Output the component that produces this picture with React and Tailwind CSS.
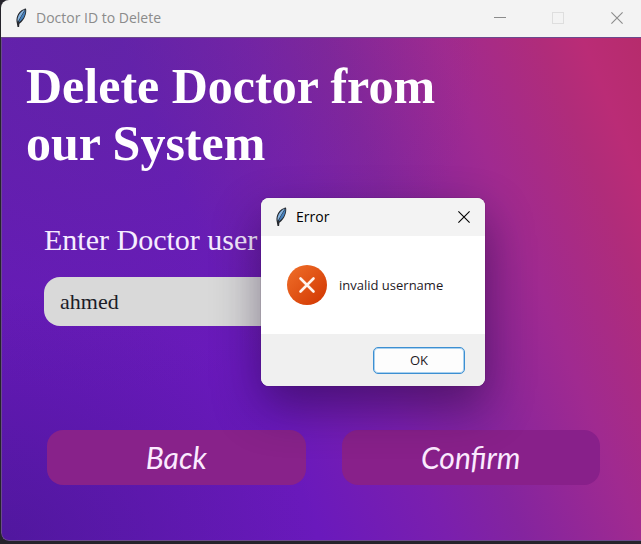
import React from "react";

function Feather() {
  return (
    <svg viewBox="0 0 16 20" className="h-5 w-4 shrink-0" aria-hidden="true">
      <path
        d="M13 .4C9.2 1 5.6 4 4.2 8C3.4 10.4 3.2 12.8 3.8 15L4.5 19H6.1L6.4 15.8C9 13.8 11.2 11 12.2 8C13.1 5.4 13.6 2.6 13 .4Z"
        fill="#25282e"
      />
      <path d="M12 1.4C8.6 2.8 5.7 6 4.9 9.4C4.5 11 4.4 12 4.8 13.8C7 9.8 9.4 5.6 12 1.4Z" fill="#86b4e0" />
      <path d="M12.4 1.8C9.8 6 7 10.2 5.6 14.4C8.8 12.2 10.8 9.8 11.6 7.2C12.2 5.4 12.6 3.6 12.4 1.8Z" fill="#4580bd" />
    </svg>
  );
}

function CloseIcon() {
  return (
    <svg viewBox="0 0 12 12" className="size-3" fill="none" stroke="currentColor" strokeWidth="1.1" aria-hidden="true">
      <path d="M.4 .4 11.6 11.6M11.6 .4 .4 11.6" />
    </svg>
  );
}

function TitleBar() {
  return (
    <header className="flex h-[37px] items-center bg-[#f3f3f3] pb-[2px] pl-3 font-['Open_Sans',sans-serif] text-[#8b8b8b]">
      <Feather />
      <span className="ml-[7px] text-sm">Doctor ID to Delete</span>
      <div className="ml-auto flex h-full items-center">
        <button type="button" aria-label="Minimize" className="flex h-full w-[46px] items-center justify-center">
          <svg viewBox="0 0 12 12" className="size-3" aria-hidden="true">
            <path d="M0 5.5H12" stroke="currentColor" />
          </svg>
        </button>
        <button type="button" disabled aria-label="Maximize" className="flex h-full w-[70px] items-center justify-center">
          <svg viewBox="0 0 12 12" className="size-3" aria-hidden="true">
            <rect x=".5" y=".5" width="11" height="11" fill="none" stroke="#dedede" />
          </svg>
        </button>
        <button type="button" aria-label="Close" className="flex h-full w-12 items-center justify-center">
          <CloseIcon />
        </button>
      </div>
    </header>
  );
}

function ErrorDialog() {
  return (
    <div
      role="alertdialog"
      aria-labelledby="error-title"
      aria-describedby="error-message"
      className="absolute left-[261px] top-[198px] w-56 overflow-hidden rounded-lg bg-white font-['Open_Sans',sans-serif] shadow-[0_0_1px_rgba(40,20,60,0.8),0_20px_48px_rgba(20,0,40,0.45)]"
    >
      <div className="flex h-[38px] items-center bg-[#f3f3f3] pl-3 text-black">
        <Feather />
        <h2 id="error-title" className="ml-[7px] text-sm">Error</h2>
        <button type="button" aria-label="Close" className="ml-auto flex h-full w-[42px] items-center justify-center">
          <CloseIcon />
        </button>
      </div>
      <div className="flex h-[98px] items-center gap-3 pl-[26px]">
        <svg viewBox="0 0 40 40" className="size-10 shrink-0" aria-hidden="true">
          <defs>
            <linearGradient id="error-fill" x1="0" y1="0" x2="1" y2="1">
              <stop offset="0" stopColor="#f0702a" />
              <stop offset="1" stopColor="#d13500" />
            </linearGradient>
          </defs>
          <circle cx="20" cy="20" r="20" fill="url(#error-fill)" />
          <path d="M13.5 13.5 26.5 26.5M26.5 13.5 13.5 26.5" stroke="#fff4ee" strokeWidth="2.6" strokeLinecap="round" />
        </svg>
        <p id="error-message" className="pt-[2px] text-[13px] font-medium text-[#1f1a1f]">invalid username</p>
      </div>
      <div className="flex h-[52px] items-center justify-end bg-[#f0f0f0] pr-5">
        <button
          type="button"
          className="h-[27px] w-[92px] rounded-[5px] border border-[#3c8fd2] bg-[#fdfdfd] text-[13px] font-medium leading-none text-[#1f1a1f] shadow-[inset_0_0_0_1px_#a9d0ee]"
        >
          OK
        </button>
      </div>
    </div>
  );
}

export default function App() {
  return (
    <div className="relative flex min-h-screen flex-col bg-[#25232b] pb-[3px] pl-px">
      <div className="flex grow flex-col overflow-hidden rounded-l-lg">
        <TitleBar />
        <main className="grow border-b border-l border-t border-[#6b4a8c] rounded-bl-lg bg-[radial-gradient(ellipse_at_0%_100%,rgba(50,20,120,0.4),transparent_35%),radial-gradient(ellipse_at_15%_0%,rgba(80,60,120,0.3),transparent_50%),linear-gradient(68deg,#6519b8_0%,#6a19bc_38%,#7a1fae_53%,#84249f_62%,#a02a90_76%,#b02c7a_88%,#ba2c76_93%,#b62c6c_100%)] font-['Liberation_Serif',serif]">
          <form onSubmit={(e) => e.preventDefault()}>
            <h1 className="px-6 pt-5 text-[50px] font-bold leading-[57px] text-white">
              Delete Doctor from
              <br />
              our System
            </h1>
            <div className="mt-[50px] flex flex-col items-start px-[42px]">
              <label htmlFor="username" className="text-[30px] leading-9 text-[#f6ecff]">
                Enter Doctor user
              </label>
              <input
                id="username"
                type="text"
                defaultValue="ahmed"
                className="mt-[19px] h-[49px] w-3/4 rounded-2xl bg-[#d9d9d9] px-4 text-[22px] text-[#1c1c28] outline-none"
              />
            </div>
            <div className="mt-[104px] grid grid-cols-2 gap-9 pl-[45px] pr-[41px] font-['Lato',sans-serif] text-[30px] italic text-[#fbeaff]">
              <button type="button" className="h-[55px] rounded-2xl bg-[#88228a]">Back</button>
              <button type="submit" className="h-[55px] rounded-2xl bg-[#88208a]">Confirm</button>
            </div>
          </form>
        </main>
      </div>
      <ErrorDialog />
    </div>
  );
}
